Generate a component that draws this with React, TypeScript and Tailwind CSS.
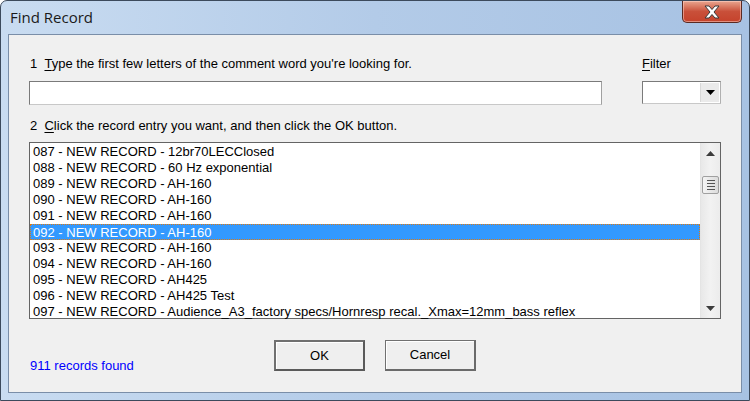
import React from "react";

const rows = [
  "087 - NEW RECORD - 12br70LECClosed",
  "088 - NEW RECORD - 60 Hz exponential",
  "089 - NEW RECORD - AH-160",
  "090 - NEW RECORD - AH-160",
  "091 - NEW RECORD - AH-160",
  "092 - NEW RECORD - AH-160",
  "093 - NEW RECORD - AH-160",
  "094 - NEW RECORD - AH-160",
  "095 - NEW RECORD - AH425",
  "096 - NEW RECORD - AH425 Test",
  "097 - NEW RECORD - Audience_A3_factory specs/Hornresp recal._Xmax=12mm_bass reflex",
];

function CloseButton() {
  return (
    <div className="absolute right-[7px] top-0 w-[60px] h-[22px] rounded-b-[5px] border border-t-0 border-[#5a2a22] bg-gradient-to-b from-[#e8a58f] via-[#c9503a] to-[#c5422b] flex items-center justify-center shadow-[inset_0_0_0_1px_rgba(255,220,210,0.5)]">
      <svg width="18" height="14" viewBox="0 0 18 14">
        <path
          d="M2 1 L6 1 L9 4.5 L12 1 L16 1 L11 7 L16 13 L12 13 L9 9.5 L6 13 L2 13 L7 7 Z"
          fill="#ffffff"
          stroke="#3a3a3a"
          strokeWidth="1"
          strokeLinejoin="round"
        />
      </svg>
    </div>
  );
}

export default function App() {
  return (
    <div
      className="relative w-[750px] h-[401px] overflow-hidden rounded-t-[7px] border border-[#3c4a5c] bg-gradient-to-r from-[#c9dcf1] via-[#b3cbe8] to-[#a7c2e3] flex flex-col"
      style={{ fontFamily: '"Liberation Sans", Arial, sans-serif' }}
    >
      <div className="h-[33px] shrink-0 flex items-center pl-[9px] relative">
        <span
          className="text-[15px] text-[#1a1a1a] leading-none"
          style={{ fontFamily: '"Open Sans", "Noto Sans", sans-serif' }}
        >
          Find Record
        </span>
        <CloseButton />
      </div>
      <div className="mx-[7px] mb-[7px] flex-1 border border-[#7a8ea8] bg-[#f0f0f0] text-[13px] text-black flex flex-col pl-[20px] pr-[20px] pt-[21px]">
        <div className="grid grid-cols-[573px_79px] gap-x-[40px]">
          <div className="h-[16px] leading-[16px] pl-[1px]">
            1&nbsp;&nbsp;<span className="underline underline-offset-2">T</span>ype the first few letters of the comment word you're looking for.
          </div>
          <div className="h-[16px] leading-[16px]">
            <span className="underline underline-offset-2">F</span>ilter
          </div>
          <div className="mt-[9px] h-[24px] bg-white border border-[#7a7a7a] border-r-[#a0a0a0] border-b-[#c8c8c8]" />
          <div className="mt-[9px] h-[23px] bg-white border border-[#7a7a7a] border-r-[#b0b0b0] border-b-[#c8c8c8] flex justify-end p-[1px]">
            <div className="w-[19px] h-full bg-[#eaeaea] border-l border-[#d8d8d8] flex items-center justify-center">
              <svg width="9" height="5" viewBox="0 0 9 5">
                <path d="M0 0 H9 L4.5 5 Z" fill="#000" />
              </svg>
            </div>
          </div>
        </div>
        <div className="mt-[13px] h-[16px] leading-[16px] pl-[1px]">
          2&nbsp;&nbsp;<span className="underline underline-offset-2">C</span>lick the record entry you want, and then click the OK button.
        </div>
        <div className="mt-[8px] h-[177px] w-[692px] bg-white border border-[#646464] flex">
          <div className="flex-1 flex flex-col pt-[1px]">
            {rows.map((r, i) =>
              i === 5 ? (
                <div
                  key={i}
                  className="h-[16px] leading-[15px] pl-[2px] bg-[#3399ff] text-white border border-dotted border-[#e07a10] whitespace-nowrap"
                >
                  {r}
                </div>
              ) : (
                <div key={i} className="h-[16px] leading-[16px] pl-[3px] whitespace-nowrap">
                  {r}
                </div>
              )
            )}
          </div>
          <div className="w-[20px] h-full bg-gradient-to-r from-[#e8e8e8] via-[#f2f2f2] to-[#ececec] border-l border-[#e4e4e4] flex flex-col items-center">
            <div className="h-[20px] flex items-center justify-center">
              <svg width="9" height="5" viewBox="0 0 9 5">
                <path d="M4.5 0 L9 5 H0 Z" fill="#3c3c3c" />
              </svg>
            </div>
            <div className="mt-[13px] w-[17px] h-[18px] rounded-[2px] border border-[#a0a0a0] bg-gradient-to-r from-[#f4f4f4] to-[#dcdcdc] flex flex-col items-center justify-center gap-[2px]">
              <div className="w-[8px] h-[1px] bg-[#555]" />
              <div className="w-[8px] h-[1px] bg-[#555]" />
              <div className="w-[8px] h-[1px] bg-[#555]" />
              <div className="w-[8px] h-[1px] bg-[#555]" />
            </div>
            <div className="flex-1" />
            <div className="h-[20px] flex items-center justify-center">
              <svg width="9" height="5" viewBox="0 0 9 5">
                <path d="M0 0 H9 L4.5 5 Z" fill="#3c3c3c" />
              </svg>
            </div>
          </div>
        </div>
        <div className="flex items-start mt-[21px]">
          <div className="w-[245px] pt-[18px] pl-[1px] text-[#0000ff] leading-[16px]">911 records found</div>
          <div className="w-[91px] h-[31px] border-2 border-[#5a5a5a] border-t-[#707070] border-l-[#707070] bg-[#efefef] flex items-center justify-center shadow-[inset_1px_1px_0_#ffffff]">
            OK
          </div>
          <div className="ml-[20px] w-[91px] h-[31px] border border-[#707070] border-r-2 border-b-2 border-r-[#6a6a6a] border-b-[#6a6a6a] bg-[#efefef] flex items-center justify-center shadow-[inset_1px_1px_0_#ffffff]">
            Cancel
          </div>
        </div>
      </div>
    </div>
  );
}
